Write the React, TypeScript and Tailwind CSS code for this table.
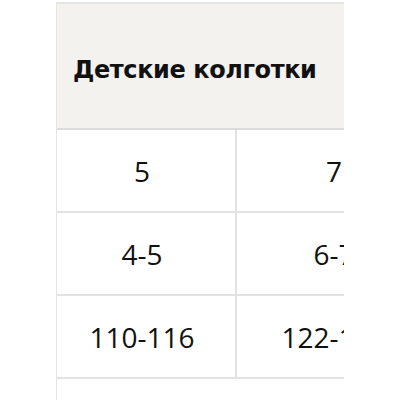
const rows = [
  ["5", "7"],
  ["4-5", "6-7"],
  ["110-116", "122-128"],
]

export default function App() {
  return (
    <div className="w-[400px] h-[400px] bg-white overflow-hidden pl-[56px] pt-[2px]">
      <div className="w-[288px] overflow-hidden border-t-2 border-l border-[#e4e4e4] text-[#111]">
        <div className="h-[126px] bg-[#f4f2ee] border-b-2 border-[#dcdcdc] flex items-center pl-[16px] pt-[8px]">
          <span className="font-['DejaVu_Sans',sans-serif] font-bold text-[24px] tracking-[-0.4px]">
            Детские колготки
          </span>
        </div>
        {rows.map((r, i) => (
          <div key={i} className="flex h-[83px] border-b-2 border-[#e2e2e2] font-['Open_Sans',sans-serif] text-[28px]">
            <div className="w-[180px] shrink-0 flex items-center justify-center pr-[8px] border-r-2 border-[#e2e2e2]">
              {r[0]}
            </div>
            <div className="w-[194px] shrink-0 flex items-center justify-center whitespace-nowrap">
              {r[1]}
            </div>
          </div>
        ))}
        <div className="h-[40px]" />
      </div>
    </div>
  )
}
